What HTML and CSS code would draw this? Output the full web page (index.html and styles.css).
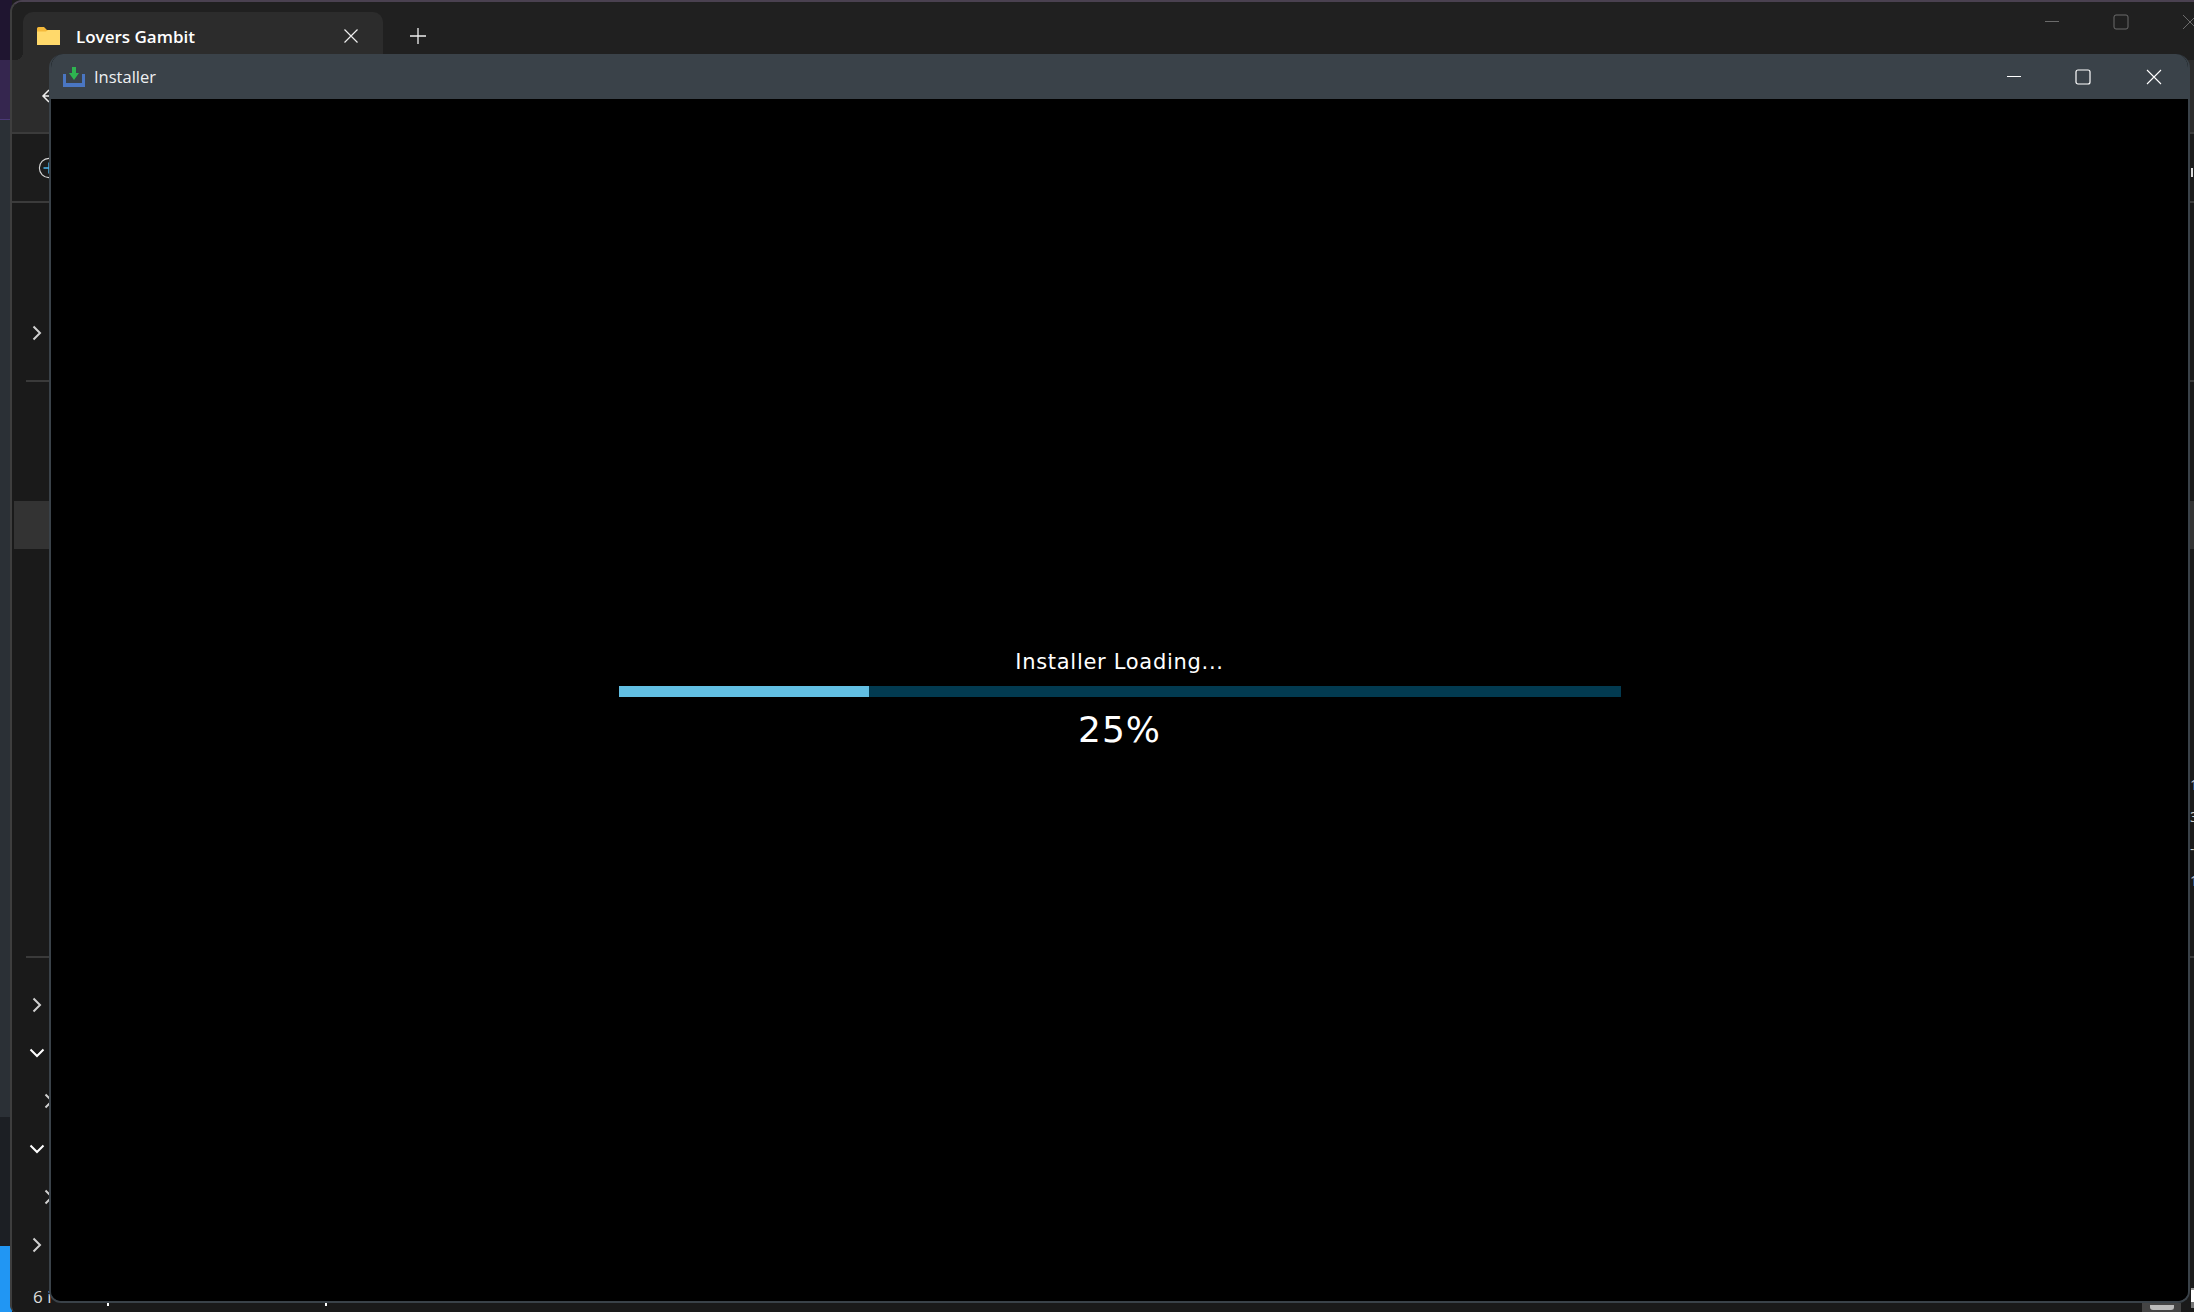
FILE: index.html
```html
<!DOCTYPE html>
<html lang="en">
<head>
  <meta charset="UTF-8" />
  <title>Installer</title>
  <link rel="stylesheet" href="styles.css">
</head>
<body>
  <div class="desktop">
    <div class="strip">
      <div class="strip-dark"></div>
      <div class="strip-top"></div>
      <div class="strip-mid"></div>
      <div class="strip-low"></div>
      <div class="strip-blue"></div>
    </div>

    <!-- Explorer window behind -->
    <div class="explorer">
      <div class="tabbar">
        <div class="tab">
          <svg class="tab-folder" width="23" height="18" viewBox="0 0 23 18">
            <path d="M0 1.500Q0 0 1.500 0H7L10 3H23V18H0Z" fill="#f5b93a"/>
            <path d="M0 4.500H9L11 3H23V18H0Z" fill="#ffd96b"/>
          </svg>
          <span class="tab-title">Lovers Gambit</span>
          <svg class="tab-close" width="14" height="14" viewBox="0 0 14 14">
            <path d="M.5.500 13.500 13.500M13.500.5.500 13.500" stroke="#eee" stroke-width="1.200" fill="none"/>
          </svg>
        </div>
        <svg class="tab-add" width="16" height="16" viewBox="0 0 16 16">
          <path d="M8 0V16M0 8H16" stroke="#eee" stroke-width="1.300" fill="none"/>
        </svg>
        <div class="win-btns dim">
          <svg width="16" height="16" viewBox="0 0 16 16"><path d="M1 7.500H15" stroke="#6b6b6b" fill="none"/></svg>
          <svg width="16" height="16" viewBox="0 0 16 16"><rect x="1" y="1" width="14" height="14" rx="2" stroke="#6b6b6b" fill="none"/></svg>
          <svg width="16" height="16" viewBox="0 0 16 16"><path d="M1 1 15 15M15 1 1 15" stroke="#6b6b6b" fill="none"/></svg>
        </div>
      </div>
      <div class="toolbar">
        <svg class="back" width="14" height="16" viewBox="0 0 14 16"><path d="M8 2 2 8l6 6M2 8h12" stroke="#eee" stroke-width="1.500" fill="none"/></svg>
      </div>
      <div class="commandbar">
        <svg class="new-btn" width="22" height="22" viewBox="0 0 24 24">
          <circle cx="12" cy="12" r="10.500" stroke="#d8d8d8" stroke-width="1.200" fill="none"/>
          <path d="M12 6V18M6 12H18" stroke="#4cb8f0" stroke-width="1.500" fill="none"/>
        </svg>
      </div>
      <div class="nav">
        <div class="nav-row"><svg class="chev" viewBox="0 0 10 16"><path d="M1.500 1.500 8 8l-6.500 6.500" /></svg></div>
        <div class="nav-sep first"></div>
        <div class="nav-selected"></div>
        <div class="nav-sep second"></div>
        <div class="nav-row"><svg class="chev" viewBox="0 0 10 16"><path d="M1.500 1.500 8 8l-6.500 6.500" /></svg></div>
        <div class="nav-row"><svg class="chev down" viewBox="0 0 16 10"><path d="M1.500 1.500 8 8l6.500-6.500" /></svg></div>
        <div class="nav-row sub"><svg class="chev" viewBox="0 0 10 16"><path d="M1.500 1.500 8 8l-6.500 6.500" /></svg></div>
        <div class="nav-row"><svg class="chev down" viewBox="0 0 16 10"><path d="M1.500 1.500 8 8l6.500-6.500" /></svg></div>
        <div class="nav-row sub"><svg class="chev" viewBox="0 0 10 16"><path d="M1.500 1.500 8 8l-6.500 6.500" /></svg></div>
        <div class="nav-row"><svg class="chev" viewBox="0 0 10 16"><path d="M1.500 1.500 8 8l-6.500 6.500" /></svg></div>
        <div class="status">6 i</div>
      </div>
      <div class="ticks">
        <span class="tick"></span>
        <span class="tick"></span>
      </div>
      <div class="edge-text">
        <span>1</span>
        <span>3</span>
        <span>-</span>
        <span>1</span>
      </div>
      <div class="edge-mark"></div>
      <div class="taskbtn"><div class="taskbtn-icon"></div></div>
      <div class="corner-box"></div>
    </div>

    <!-- Installer window on top -->
    <div class="installer">
      <div class="inst-title">
        <svg class="inst-icon" width="22" height="20" viewBox="0 0 22 20">
          <path d="M0 7H3V16H19V7H22V20H0Z" fill="#4a76c2"/>
          <path d="M9 0H13V6H16L11 13 6 6H9Z" fill="#2eb350"/>
        </svg>
        <span class="inst-name">Installer</span>
        <div class="win-btns">
          <svg width="16" height="16" viewBox="0 0 16 16"><path d="M1 7.500H15" stroke="#fff" fill="none"/></svg>
          <svg width="16" height="16" viewBox="0 0 16 16"><rect x="1" y="1" width="14" height="14" rx="2" stroke="#fff" stroke-width="1.200" fill="none"/></svg>
          <svg width="16" height="16" viewBox="0 0 16 16"><path d="M1 1 15 15M15 1 1 15" stroke="#fff" stroke-width="1.100" fill="none"/></svg>
        </div>
      </div>
      <div class="inst-body">
        <div class="loader">
          <div class="loader-label">Installer Loading...</div>
          <div class="bar"><div class="bar-fill" style="width: 25%"></div></div>
          <div class="loader-pct">25%</div>
        </div>
      </div>
    </div>
  </div>
</body>
</html>
```

FILE: styles.css
```css
html, body {
  margin: 0;
  background: #1c1c1c;
}

.desktop {
  position: relative;
  width: 2194px;
  height: 1312px;
  overflow: hidden;
  background: #1c1c1c;
  font-family: "Open Sans", sans-serif;
  color: #fff;
}

/* wallpaper showing on the left */
.strip {
  position: absolute;
  left: 0;
  top: 0;
  width: 12px;
  height: 1312px;
  display: flex;
  flex-direction: column;
}

.strip-dark {
  height: 60px;
  background: #1f1530;
  flex: none;
}

.strip-top {
  height: 60px;
  background: #35264f;
  border-bottom: 1px solid #4b3a78;
  box-sizing: border-box;
  flex: none;
}

.strip-mid {
  height: 997px;
  background: #2b3036;
  flex: none;
}

.strip-low {
  height: 129px;
  background: #1c1f24;
  flex: none;
}

.strip-blue {
  flex: 1;
  background: #2196f3;
}

.explorer {
  position: absolute;
  left: 10px;
  top: 0;
  width: 2190px;
  height: 1312px;
  box-sizing: border-box;
  border-top: 2px solid #4a4150;
  border-left: 2px solid #3e3e3e;
  border-radius: 12px 0 0 6px;
  background: #1a1a1a;
  display: flex;
  flex-direction: column;
}

.tabbar {
  height: 58px;
  flex: none;
  background: #202020;
  display: flex;
  align-items: flex-start;
  padding: 10px 0 0 11px;
  box-sizing: border-box;
  border-radius: 10px 0 0 0;
}

.tab {
  position: relative;
  width: 360px;
  height: 48px;
  flex: none;
  background: #2c2c2c;
  border-radius: 10px 10px 0 0;
  display: flex;
  align-items: center;
  padding: 0 25px 0 14px;
  box-sizing: border-box;
}

/* flare at the foot of the tab */
.tab::before {
  content: "";
  position: absolute;
  left: -8px;
  bottom: 0;
  width: 8px;
  height: 8px;
  background: radial-gradient(circle at 0 0, transparent 8px, #2c2c2c 8px);
}

.tab-folder {
  flex: none;
}

.tab-title {
  margin-left: 16px;
  font-size: 17px;
  font-weight: 600;
  flex: 1;
}

.tab-add {
  margin: 16px 0 0 27px;
}

.win-btns {
  display: flex;
  align-items: center;
  gap: 53px;
  margin-left: auto;
}

.win-btns svg:last-child {
  margin-left: 2px;
}

.win-btns.dim {
  margin-top: 2px;
  margin-right: 2px;
}

.win-btns.dim svg:last-child {
  margin-left: 0;
}

.toolbar {
  height: 72px;
  flex: none;
  background: #2c2c2c;
  border-bottom: 2px solid #3b3b3b;
  padding-left: 29px;
  display: flex;
  align-items: center;
}

.commandbar {
  height: 67px;
  flex: none;
  background: #1c1c1c;
  border-bottom: 2px solid #3b3b3b;
  padding-left: 26px;
  display: flex;
  align-items: center;
}

.nav {
  flex: 1;
  padding-top: 106px;
  display: flex;
  flex-direction: column;
}

.nav-row {
  height: 48px;
  flex: none;
  display: flex;
  align-items: center;
  padding-left: 20px;
}

.nav-row.sub {
  padding-left: 32px;
}

.chev {
  width: 10px;
  height: 16px;
  fill: none;
  stroke: #d0d0d0;
  stroke-width: 2;
}

.chev.down {
  width: 16px;
  height: 10px;
  margin-left: -3px;
  stroke: #fff;
}

.nav-sep {
  height: 2px;
  margin-left: 14px;
  background: #3a3a3a;
  flex: none;
}

.nav-sep.first {
  margin-top: 23px;
}

.nav-sep.second {
  margin-top: 407px;
  margin-bottom: 23px;
}

.nav-selected {
  height: 48px;
  margin-top: 119px;
  margin-left: 2px;
  background: #333;
  flex: none;
}

.status {
  padding: 16px 0 0 21px;
  font-size: 17px;
  color: #ddd;
}

.ticks {
  position: absolute;
  left: 95px;
  bottom: 6px;
  display: flex;
  gap: 216px;
}

.tick {
  width: 2px;
  height: 3px;
  background: #fff;
}

.edge-text {
  position: absolute;
  left: 2178px;
  top: 774px;
  display: flex;
  flex-direction: column;
  gap: 14px;
  font-size: 14px;
  color: #ccc;
  line-height: 18px;
}

.edge-mark {
  position: absolute;
  left: 2179px;
  top: 166px;
  width: 2px;
  height: 9px;
  background: #ddd;
}

.taskbtn {
  position: absolute;
  left: 2130px;
  bottom: 0;
  width: 39px;
  height: 9px;
  background: #444;
}

.taskbtn-icon {
  width: 24px;
  height: 5px;
  margin: 0 auto;
  margin-top: 2px;
  box-sizing: border-box;
  border: 2px solid #bbb;
  border-top: 0;
  border-radius: 0 0 3px 3px;
  background: #bbb;
}

.corner-box {
  position: absolute;
  left: 2179px;
  top: 1286px;
  width: 6px;
  height: 12px;
  background: #fff;
  border-top: 2px solid #999;
  border-bottom: 6px solid #777;
}

/* installer */
.installer {
  position: absolute;
  left: 49px;
  top: 54px;
  width: 2141px;
  height: 1249px;
  box-sizing: border-box;
  border-radius: 14px 14px 12px 12px;
  background: #000;
  border: 2px solid #3a4249;
  border-top: 0;
  display: flex;
  flex-direction: column;
  overflow: hidden;
}

.inst-title {
  height: 45px;
  flex: none;
  background: #3a4249;
  display: flex;
  align-items: center;
  padding: 0 26px 0 12px;
}

.inst-icon {
  flex: none;
}

.inst-name {
  margin-left: 9px;
  font-size: 16.500px;
  color: #eef0f2;
}

.inst-body {
  flex: 1;
  background: #000;
  padding-top: 549px;
  display: flex;
  justify-content: center;
  align-items: flex-start;
}

.loader {
  width: 1002px;
  font-family: "DejaVu Sans", sans-serif;
  text-align: center;
  display: flex;
  flex-direction: column;
}

.loader-label {
  font-size: 21px;
  line-height: 28px;
  letter-spacing: 0.700px;
  margin-bottom: 10px;
}

.bar {
  height: 11px;
  background: #023a50;
}

.bar-fill {
  height: 100%;
  background: #62bfe3;
}

.loader-pct {
  margin-top: 11px;
  font-size: 36px;
  line-height: 44px;
  letter-spacing: 1px;
}
```
